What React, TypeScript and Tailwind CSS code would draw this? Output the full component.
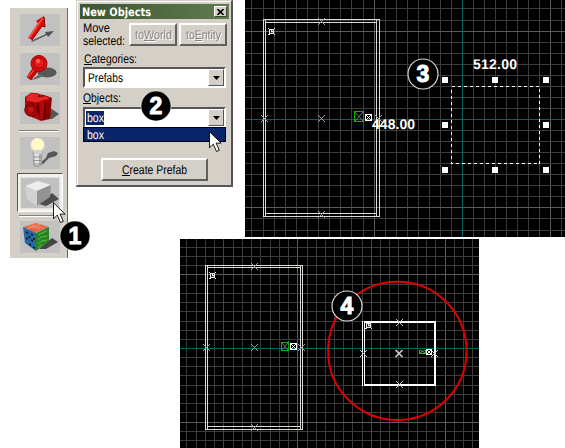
import React from "react";

const uiFont = "font-['Liberation_Sans',Arial,sans-serif]";

type Line = { at: number; color: string };

function Grid({ xs, ys, x0, y0, w, h, brightX, brightY, teal, orange }: {
  xs: number[]; ys: number[]; x0: number; y0: number; w: number; h: number;
  brightX: number[]; brightY: number[]; teal: [number, number]; orange: number;
}) {
  const rows: Line[] = ys.map((y) => ({ at: y, color: brightY.includes(y) ? "#5c5c5c" : "#3c3c3c" }));
  const cols: Line[] = xs.map((x) => ({ at: x, color: brightX.includes(x) ? "#5c5c5c" : "#3c3c3c" }));
  return (
    <g>
      <rect x={x0} y={y0} width={w} height={h} fill="#000" />
      {cols.map((l) => <rect key={l.at} x={l.at} y={y0} width="1" height={h} fill={l.color} />)}
      {rows.map((l) => <rect key={l.at} x={x0} y={l.at} width={w} height="1" fill={l.color} />)}
      <rect x={orange} y={y0} width="1" height={h} fill="#6c3610" />
      <rect x={teal[0]} y={y0} width="1" height={h} fill="#006464" />
      <rect x={x0} y={teal[1]} width={w} height="1" fill="#006464" />
    </g>
  );
}

function Mark({ x, y, c = "#a0a0a0" }: { x: number; y: number; c?: string }) {
  return <path d={`M${x - 3} ${y - 3}l7 7M${x + 4} ${y - 3}l-7 7`} stroke={c} strokeWidth="1" fill="none" shapeRendering="crispEdges" />;
}

function Spawn({ x, y }: { x: number; y: number }) {
  return (
    <g fill="#e8e8e8" shapeRendering="crispEdges">
      <path d={`M${x} ${y}h1v1h5v-1h1v1h-1v5h1v1h-1v-1h-4v1h-2v-1h1v-5h-1z`} />
      <rect x={x + 2} y={y + 2} width="1" height="3" fill="#222" />
      <rect x={x + 4} y={y + 2} width="1" height="1" fill="#333" />
      <rect x={x + 3} y={y + 4} width="2" height="1" fill="#555" />
    </g>
  );
}

function Entity({ x, y, w, h, c, cross }: { x: number; y: number; w: number; h: number; c: string; cross: string }) {
  return (
    <g fill="none">
      <path d={`M${x + 1} ${y + 1}L${x + w - 1} ${y + h - 1}M${x + w - 1} ${y + 1}L${x + 1} ${y + h - 1}`} stroke={cross} />
      <rect x={x + 0.5} y={y + 0.5} width={w - 1} height={h - 1} stroke={c} />
    </g>
  );
}

const topXs = [251, 263, 274, 285, 296, 307, 318, 329, 340, 351, 363, 374, 385, 396, 407, 418, 429, 440, 451, 462, 473, 484, 495, 506, 517, 528, 539, 550, 561];
const topYs = [8, 20, 31, 42, 53, 64, 75, 86, 97, 108, 119, 130, 141, 152, 163, 174, 185, 196, 207, 218, 230];
const lowXs = [186, 196, 205, 214, 223, 233, 242, 251, 260, 270, 279, 288, 297, 307, 316, 325, 334, 343, 352, 362, 371, 380, 389, 398, 408, 417, 426, 435, 445, 454, 463, 472];
const lowYs = [247, 256, 265, 274, 284, 293, 302, 311, 321, 330, 339, 348, 357, 366, 375, 385, 394, 403, 412, 422, 431, 440];

function TopView() {
  return (
    <svg className="block h-[237px] w-[320px] shrink-0" viewBox="245 0 320 237" textRendering="geometricPrecision">
      <Grid xs={topXs} ys={topYs} x0={245} y0={0} w={320} h={237} brightX={[374, 550]} brightY={[31, 207]} teal={[462, 119]} orange={285} />
      <g fill="none" stroke="#dcdcd6" shapeRendering="crispEdges">
        <rect x="263.5" y="19.5" width="116" height="197" />
        <path d="M265.5 20V216M376.5 20V216M265 22.5H377M265 213.5H377" />
      </g>
      <Mark x={321} y={21} /><Mark x={264} y={118} /><Mark x={321} y={118} /><Mark x={378} y={118} /><Mark x={321} y={214} />
      <Spawn x={268} y={28} />
      <Entity x={354} y={111} w={10} h={11} c="#00b400" cross="#707070" />
      <Entity x={365} y={114} w={7} h={7} c="#fff" cross="#fff" />
      <rect x="451.5" y="86.5" width="88" height="77" fill="none" stroke="#fff" strokeDasharray="3 3" shapeRendering="crispEdges" />
      {[[442, 77], [492, 77], [543, 77], [442, 122], [543, 122], [442, 167], [492, 167], [543, 167]].map(([x, y]) => (
        <rect key={`${x}-${y}`} x={x} y={y} width="6" height="6" fill="#fff" />
      ))}
      <text x="473" y="69" textLength="44" fontSize="14" fill="#fff" className="font-['Liberation_Sans',Arial,sans-serif] font-bold">512.00</text>
      <text x="372" y="129" textLength="43" fontSize="14" fill="#fff" className="font-['Liberation_Sans',Arial,sans-serif] font-bold">448.00</text>
    </svg>
  );
}

function LowerView() {
  return (
    <svg className="ml-[112px] mt-[2px] block h-[209px] w-[299px] shrink-0" viewBox="180 239 299 209">
      <Grid xs={lowXs} ys={lowYs} x0={180} y0={239} w={299} h={209} brightX={[297, 445]} brightY={[274, 422]} teal={[371, 348]} orange={223} />
      <g fill="none" stroke="#dcdcd6" shapeRendering="crispEdges">
        <rect x="205.5" y="265.5" width="97" height="164" />
        <path d="M207.5 266V429M300.5 266V429M207 267.5H301M207 426.5H301" />
      </g>
      <Mark x={254} y={266} /><Mark x={206} y={347} /><Mark x={254} y={347} /><Mark x={301} y={347} /><Mark x={254} y={427} />
      <Spawn x={209} y={272} />
      <Entity x={281} y={342} w={8} h={9} c="#00b400" cross="#707070" />
      <Entity x={290} y={343} w={7} h={7} c="#fff" cross="#fff" />
      <circle cx="397.3" cy="350.9" r="69.2" fill="none" stroke="#dc0000" strokeWidth="2" />
      <path d="M362.5 321V386M364.5 321V386" stroke="#fff" shapeRendering="crispEdges" />
      <path d="M364 322H435V385H364" stroke="#fff" strokeWidth="2" fill="none" shapeRendering="crispEdges" />
      <Mark x={399} y={322} c="#c8c8c8" /><Mark x={363} y={353} c="#c8c8c8" /><Mark x={434} y={353} c="#c8c8c8" /><Mark x={399} y={384} c="#c8c8c8" />
      <path d="M395.5 350l7 7M402.5 350l-7 7" stroke="#ccc" strokeWidth="1.7" />
      <Spawn x={365} y={322} />
      <path d="M419.500 350v4M425.500 350v4M419 353.500h7" stroke="#20b020" shapeRendering="crispEdges" />
      <path d="M420 350l5 3M425 350l-5 3" stroke="#40d040" strokeWidth=".8" />
      <Entity x={426} y={349} w={6} h={6} c="#fff" cross="#fff" />
    </svg>
  );
}

function Tile({ children }: { children: React.ReactNode }) {
  return <svg className="ml-[10px] block h-8 w-10 bg-[#c1c1c1]" viewBox="0 0 40 32">{children}</svg>;
}

function Separator({ className }: { className: string }) {
  return <div className={`ml-[9px] h-[2px] w-[39px] border-t border-[#808080] bg-white ${className}`} />;
}

function Toolbar() {
  return (
    <aside className="ml-[10px] mt-2 flex h-[250px] w-[58px] shrink-0 flex-col items-start border-r border-[#6a6a6a] bg-[#d4d0c8] pt-[6px]">
      <Tile>
        <path d="M11 27l15-7-1-2 9-1-6 6-1-2-15 7z" fill="#515151" />
        <path d="M8 24L18 9l-2-2 8-5 1 11-3-1-10 14z" fill="#d90b0b" />
        <path d="M9 24L20 8l3-4" stroke="#ff5548" strokeWidth="1.4" fill="none" />
        <path d="M12 26L22 12l3 1-1-10" stroke="#800" fill="none" />
      </Tile>
      <div className="mt-[7px]"><Tile>
        <ellipse cx="27" cy="19.5" rx="9.5" ry="5" fill="#575757" />
        <path d="M11 27l9-6 4 2-8 3z" fill="#666" />
        <path d="M13 15l5 3-7 9-4-3z" fill="#c60808" stroke="#850000" strokeWidth=".6" />
        <circle cx="19" cy="10.5" r="8" fill="#e01010" stroke="#9e0000" />
        <circle cx="19" cy="10" r="5.3" fill="#e61c1c" stroke="#9a0000" />
        <circle cx="18" cy="8" r="2.2" fill="#ff5c50" />
        <path d="M8 24l6-7" stroke="#ff4038" strokeWidth="1.3" />
      </Tile></div>
      <div className="mt-[7px]"><Tile>
        <path d="M26 13l13 9-7 5-20-1z" fill="#555" />
        <path d="M5 5l7-4 12 2 8 3-2 21-9 2-9-4-7-8z" fill="#a80909" />
        <path d="M6 5l5-4 8 1-1 3 7-1 6 2-4 2-9 3-12-2z" fill="#e62626" stroke="#800" strokeWidth=".6" />
        <path d="M17 11l9-3v19l-5 1-4-9z" fill="#6a0000" />
        <path d="M19 10l6-3-2 20h-3z" fill="#b40808" />
        <path d="M27 8l4-2-1 20-4 1z" fill="#860404" />
        <circle cx="11" cy="18" r="6.2" fill="#b70808" stroke="#610000" />
        <circle cx="11" cy="17.5" r="3.5" fill="#cb1515" stroke="#780000" />
      </Tile></div>
      <Separator className="mt-[6px]" />
      <div className="mt-[5px]"><Tile>
        <path d="M19 27l7-6 2-5 6-2 4 2-2 3-7 2-6 6z" fill="#555" />
        <path d="M12 13h11l-1 6v9l-3 2h-4l-2-2v-9z" fill="#a9a9a9" />
        <path d="M14 14h5v14h-4z" fill="#e4e4e4" />
        <path d="M13 20h9M13 23.5h9M14 27h8" stroke="#808080" strokeWidth=".7" />
        <circle cx="17.5" cy="8.5" r="7.5" fill="#d8d8cc" />
        <circle cx="17.5" cy="7.5" r="6.4" fill="#fffbc8" />
        <path d="M12.500 13h10l-1 4h-7z" fill="#d0d0d0" />
      </Tile></div>
      <div className="ml-[7px] mt-1 flex h-[39px] w-[46px] items-center border border-b-white border-l-[#555] border-r-white border-t-[#555] bg-[#f2f0eb] pl-[2px]">
        <svg className="block h-8 w-10 bg-[#c1c1c1]" viewBox="0 0 40 32">
          <path d="M19 27L32 16l7 6-13 7z" fill="#4c4c4c" />
          <path d="M5 9L18 4l13 4-14 6z" fill="#ededed" />
          <path d="M5 9l12 5v15L7 22z" fill="#d2d2d2" />
          <path d="M17 14l14-6-1 12-13 9z" fill="#929292" />
          <rect x=".5" y=".5" width="39" height="31" fill="none" stroke="#fff" strokeDasharray="1 1" />
        </svg>
      </div>
      <Separator className="mt-[3px]" />
      <div className="mt-[4px]"><Tile>
        <path d="M19 28L32 17l6 4-12 7z" fill="#444" />
        <path d="M3 6L16 2l13 4-14 6z" fill="#e0694a" />
        <path d="M3 6l13 6v18L5 22z" fill="#2569a6" />
        <path d="M16 12l13-6v14l-13 10z" fill="#278228" />
        <path d="M8 5l12 3M12 4l12 3M7 8l13-5" stroke="#ff9c79" strokeWidth=".7" />
        <path d="M6 11l2 1M11 13l2 1M6 17l2 1M11 19l2 1M9 23l2 1M14 17v2M13 26l2 1M9 15l1 2" stroke="#171a10" strokeWidth="1.8" />
        <path d="M18 14l4-2 5-2M18 19l3-3 6-1M18 23l4-3 5-1M18 27l4-4" stroke="#5fbd35" fill="none" />
      </Tile></div>
    </aside>
  );
}

const raised = "border-2 border-b-[#606060] border-l-white border-r-[#606060] border-t-white bg-[#d4d0c8]";

function Label({ text, width, mnemonic, embossed }: { text: string; width: number; mnemonic?: [number, number]; embossed?: boolean }) {
  return (
    <svg className={`block h-[14px] shrink-0 overflow-visible ${embossed ? "drop-shadow-[1px_1px_0_#ffffff]" : ""}`} width={width} viewBox={`0 0 ${width} 14`} textRendering="geometricPrecision">
      <text x="0" y="11" fontSize="12.5" textLength={width} lengthAdjust="spacingAndGlyphs" fill="currentColor" className={uiFont}>{text}</text>
      {mnemonic && <rect x={mnemonic[0]} y="12" width={mnemonic[1]} height="1" fill="currentColor" />}
    </svg>
  );
}

function Combo({ children }: { children: React.ReactNode }) {
  return (
    <div className="flex h-[21px] w-[143px] border-2 border-b-white border-l-[#555] border-r-white border-t-[#555] bg-white">
      <div className="flex flex-1 items-center">{children}</div>
      <div className="flex h-[17px] w-4 items-center justify-center border border-b-[#555] border-l-white border-r-[#555] border-t-white bg-[#d4d0c8]">
        <svg className="h-[4px] w-[7px]" viewBox="0 0 7 4"><path d="M0 0h7L3.5 4z" /></svg>
      </div>
    </div>
  );
}

function Dialog() {
  return (
    <section className="ml-2 flex h-[187px] w-[157px] shrink-0 flex-col border-b-2 border-l border-r-2 border-t border-b-[#555] border-l-[#d4d0c8] border-r-[#555] border-t-[#d4d0c8] bg-[#d4d0c8]">
      <div className="flex h-full flex-col border-l border-t border-white pl-[2px] pt-[2px]">
        <header className="flex h-[15px] w-[149px] shrink-0 items-center justify-between bg-linear-to-r from-[#3c5430] to-[#607b50] pl-[2px] pr-[2px] text-white">
          <svg className="block h-[14px] w-[69px] overflow-visible" viewBox="0 0 69 14" textRendering="geometricPrecision">
            <text x="0" y="11" fontSize="11.5" textLength="69" lengthAdjust="spacingAndGlyphs" fill="#fff" className="font-['DejaVu_Sans',sans-serif] font-bold">New Objects</text>
          </svg>
          <span className="flex h-[11px] w-[13px] items-center justify-center border border-b-[#404040] border-l-white border-r-[#404040] border-t-white bg-[#d4d0c8]">
            <svg className="h-[6px] w-[7px]" viewBox="0 0 7 6"><path d="M.5 0l6 6M6.5 0l-6 6" stroke="#000" strokeWidth="1.6" /></svg>
          </span>
        </header>
        <div className="mt-1 flex h-[23px] shrink-0 pl-[3px]">
          <div className="-mt-[2px] flex w-[46px] flex-col">
            <div className="h-[13px]"><Label text="Move" width={27} /></div>
            <Label text="selected:" width={42} />
          </div>
          <button className={`flex h-[23px] w-[48px] items-center justify-center text-[#858585] ${raised}`}>
            <Label text="toWorld" width={37} mnemonic={[9, 11]} embossed />
          </button>
          <button className={`ml-[2px] flex h-[23px] w-[48px] items-center justify-center text-[#858585] ${raised}`}>
            <Label text="toEntity" width={35} mnemonic={[9, 7]} embossed />
          </button>
        </div>
        <div className="mt-[6px] pl-1"><Label text="Categories:" width={53} mnemonic={[0, 8]} /></div>
        <div className="ml-[3px] mt-[1px]"><Combo><div className="pl-[3px]"><Label text="Prefabs" width={35} /></div></Combo></div>
        <div className="mt-[3px] pl-[3px]"><Label text="Objects:" width={38} mnemonic={[0, 8]} /></div>
        <div className="ml-[3px] mt-[2px]">
          <Combo><div className="ml-[1px] bg-[#0a246a] pl-[1px] text-white"><Label text="box" width={17} /></div></Combo>
        </div>
        <div className="ml-[3px] -mt-[1px] flex h-[15px] w-[143px] shrink-0 items-center border border-black bg-[#0a246a] pl-[3px] text-white"><Label text="box" width={17} /></div>
        <button className={`ml-[21px] mt-4 flex h-[23px] w-[107px] shrink-0 items-center justify-center ${raised}`}>
          <Label text="Create Prefab" width={65} mnemonic={[0, 8]} />
        </button>
      </div>
    </section>
  );
}

function Badge({ n, place, ring }: { n: string; place: string; ring?: boolean }) {
  return (
    <svg className={`absolute h-8 w-8 ${place}`} viewBox="0 0 32 32">
      <circle cx="16" cy="16" r="15" fill="#000" stroke={ring ? "#d8d8d8" : "#fff"} strokeWidth="1.2" strokeOpacity={ring ? 1 : 0.5} />
      <text x="16" y="24" textAnchor="middle" fontSize="23" fill="#fff" stroke="#fff" strokeWidth="1" className="font-['Liberation_Sans',Arial,sans-serif] font-bold">{n}</text>
    </svg>
  );
}

function Cursor({ place }: { place: string }) {
  return (
    <svg className={`absolute h-[22px] w-[13px] ${place}`} viewBox="0 0 13 22">
      <path d="M.5.7v16l3.8-3.5 3.2 7.3 2.8-1.2-3.2-7.2h5z" fill="#fff" stroke="#000" strokeWidth=".9" />
    </svg>
  );
}

export default function App() {
  return (
    <main className="relative flex h-[448px] w-[565px] overflow-hidden bg-white text-black">
      <Toolbar />
      <div className="flex flex-col">
        <div className="flex h-[237px]">
          <Dialog />
          <div className="ml-[12px]"><TopView /></div>
        </div>
        <LowerView />
      </div>
      <Cursor place="left-[53px] top-[202px]" />
      <Cursor place="left-[209px] top-[131px]" />
      <Badge n="1" place="left-[59px] top-[220px]" />
      <Badge n="2" place="left-[140px] top-[90px]" />
      <Badge n="3" place="left-[407px] top-[58px]" ring />
      <Badge n="4" place="left-[331px] top-[290px]" ring />
    </main>
  );
}
